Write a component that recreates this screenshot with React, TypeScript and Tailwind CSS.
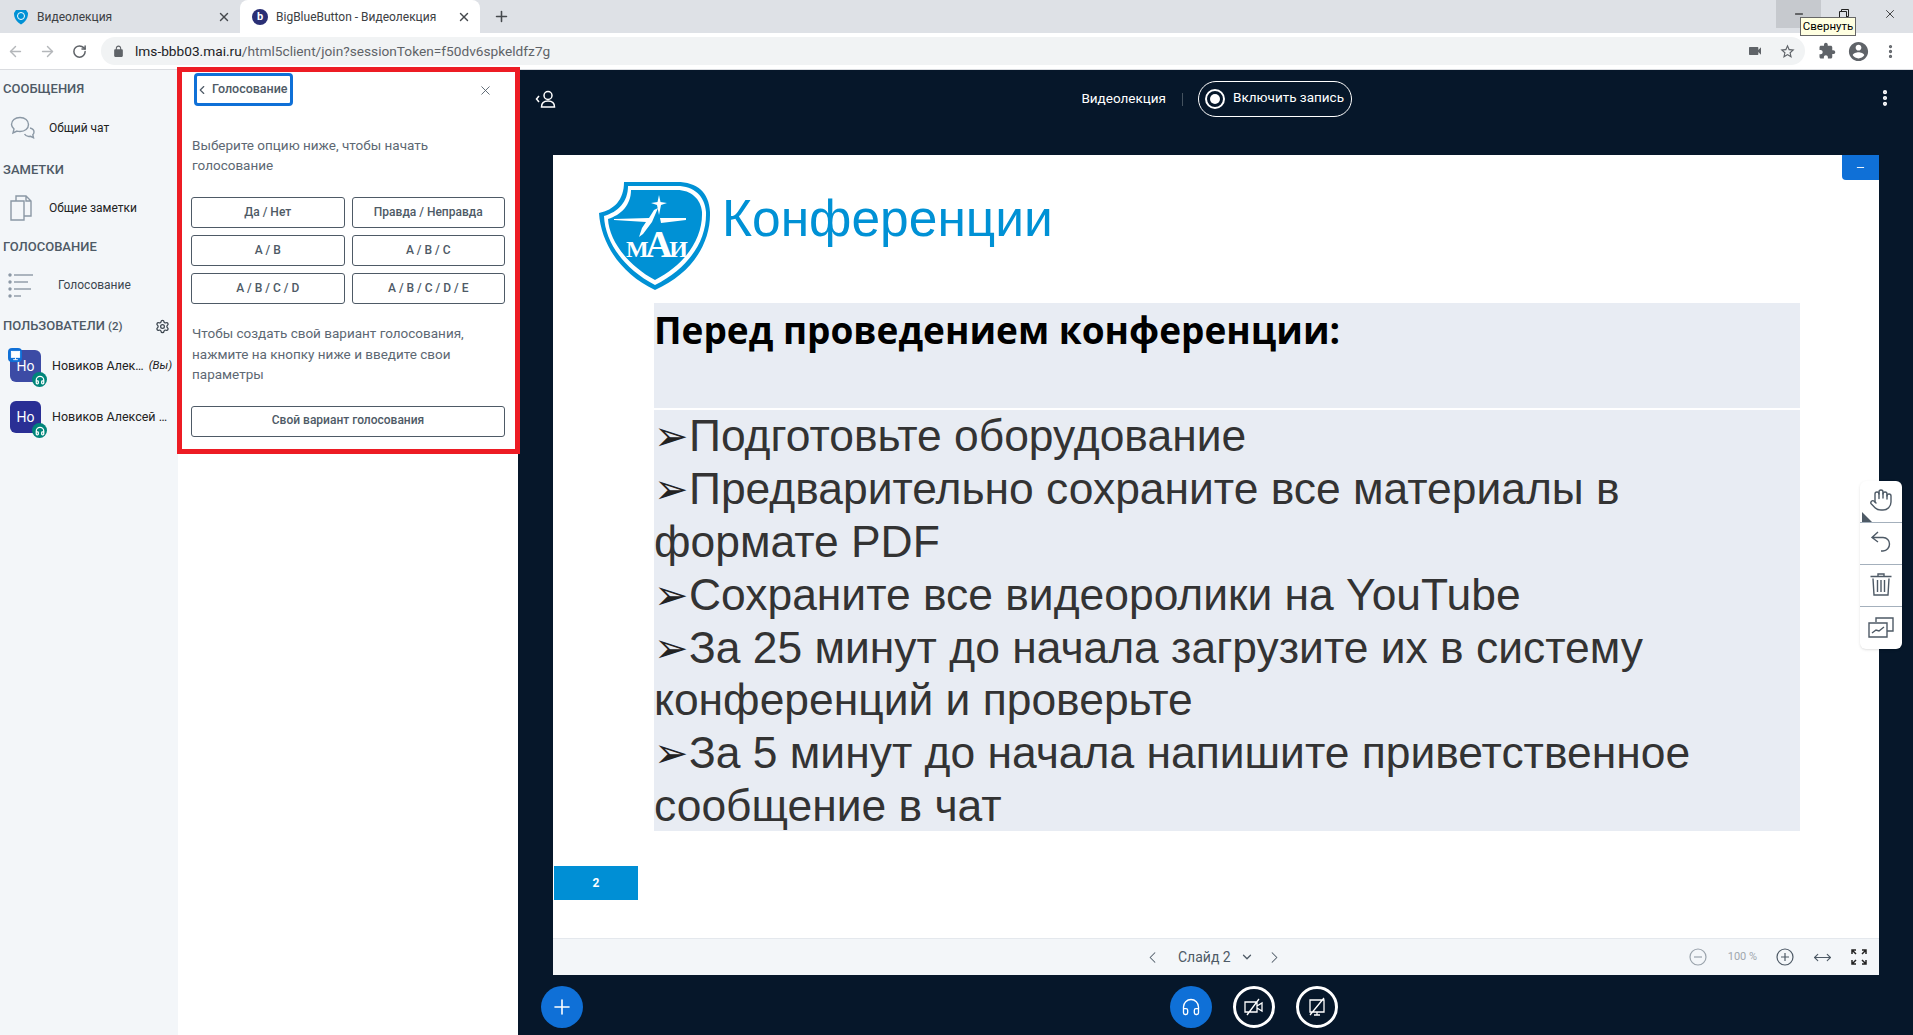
import React from 'react';
import { ArrowLeft, ArrowRight, RotateCw, Plus, X, ChevronLeft, ChevronRight, ChevronDown, Settings, MoreVertical, Minus, MoveHorizontal, Hand, Headphones } from 'lucide-react';

const ui = "font-['Roboto',sans-serif]";
const slideText = "font-['Liberation_Sans',sans-serif]";

const Maticon: React.FC<{ d: string; className?: string }> = ({ d, className }) => (
  <svg viewBox="0 0 24 24" fill="currentColor" className={className}>
    <path d={d} />
  </svg>
);

const Shield: React.FC = () => (
  <svg viewBox="0 0 112 108" className="w-[112px] h-[108px] shrink-0">
    <path d="M25 0 H78 C98 0 110 10 111 30 C112 62 92 92 56 108 C22 92 2 62 0 31 C15 28 25 18 25 0 Z" fill="#0091d5" />
    <path d="M29 4 H78 C95 4 106 14 107 30 C108 60 88 87 56 103 C25 87 6 60 5 34 C19 30 29 20 29 4 Z" fill="#fff" />
    <path d="M32 8 H78 C92 8 102 17 103 30 C104 58 85 83 56 98 C28 83 10 58 9 37 C22 33 32 23 32 8 Z" fill="#0091d5" />
    {/* star and plane */}
    <path d="M60 13 L61.500 20 L68 21 L62 23 L60 33 L58 23 L52 21 L58.500 20 Z" fill="#fff" />
    <path d="M59 26 L53 40 L44 52 L40 55 L43 46 L47 40 L15 38 L15 37 L50 36 L55 28 Z" fill="#fff" />
    <path d="M61 36 L87 36 L87 38 L62 41 Z" fill="#fff" />
    <text x="27" y="75" fill="#fff" fontFamily="Liberation Serif, serif" fontWeight="700" fontSize="24" textLength="62">
      М<tspan fontSize="38">А</tspan>И
    </text>
  </svg>
);

const SectionTitle: React.FC<{ children: React.ReactNode; className?: string }> = ({ children, className }) => (
  <div className={`text-[13px] font-medium leading-4 text-[#4e5a66] ${className ?? ''}`}>{children}</div>
);

const Avatar: React.FC<{ color: string; presenter?: boolean }> = ({ color, presenter }) => (
  <div className={`relative w-[31px] h-[32px] rounded-md ${color} flex items-center justify-center text-white text-[14px] shrink-0`}>
    Но
    {presenter && (
      <span className="absolute -left-[2px] -top-[2px] w-[14px] h-[14px] rounded bg-[#0f70d7] flex items-center justify-center">
        <svg viewBox="0 0 12 12" className="w-[11px] h-[11px]" fill="none" stroke="#fff">
          <rect x="1.5" y="1.5" width="9" height="6.5" fill="#fff" />
          <path d="M6 8v2.500M3.500 10.500h5" />
        </svg>
      </span>
    )}
    <span className="absolute -right-[6px] -bottom-[5px] w-[15px] h-[15px] rounded-full bg-[#00857a] flex items-center justify-center">
      <Headphones size={10} color="#fff" strokeWidth={3} />
    </span>
  </div>
);

const PollButton: React.FC<{ children: React.ReactNode; className?: string }> = ({ children, className }) => (
  <div className={`h-[31px] pb-[2px] rounded-[3px] border border-[#4e5a66] flex items-center justify-center text-[12px] font-medium text-[#4e5a66] ${className ?? ''}`}>
    {children}
  </div>
);

const bullets = [
  { arrow: true, text: 'Подготовьте оборудование' },
  { arrow: true, text: 'Предварительно сохраните все материалы в' },
  { arrow: false, text: 'формате PDF' },
  { arrow: true, text: 'Сохраните все видеоролики на YouTube' },
  { arrow: true, text: 'За 25 минут до начала загрузите их в систему' },
  { arrow: false, text: 'конференций и проверьте' },
  { arrow: true, text: 'За 5 минут до начала напишите приветственное' },
  { arrow: false, text: 'сообщение в чат' },
];

const App: React.FC = () => {
  return (
    <div className={`relative w-full h-screen overflow-hidden flex flex-col bg-white ${ui}`}>
      {/* Tabs */}
      <div className="relative h-[33px] bg-[#dee1e6] flex items-stretch text-[12px] text-[#3c4043] shrink-0">
        <div className="w-[240px] flex items-center pl-[13px] pr-[9px]">
          <svg viewBox="0 0 16 16" className="w-[16px] h-[16px]">
            <path d="M3 1 H13 L15 4 C15 10 12 13 8 15.500 C4 13 1 10 1 4 Z" fill="#0091d5" />
            <circle cx="8" cy="7" r="3.500" fill="none" stroke="#fff" />
          </svg>
          <span className="ml-[8px]">Видеолекция</span>
          <X size={14} strokeWidth={2.4} className="ml-auto text-[#45494d]" />
        </div>
        <div className="w-[240px] bg-white rounded-t-lg flex items-center pl-[12px] pr-[9px]">
          <span className="w-[16px] h-[16px] rounded-full bg-[#2a2f75] flex items-center justify-center text-white text-[11px] font-bold leading-none">b</span>
          <span className="ml-[8px]">BigBlueButton - Видеолекция</span>
          <X size={14} strokeWidth={2.4} className="ml-auto text-[#45494d]" />
        </div>
        <Plus size={17} strokeWidth={2.2} className="ml-[13px] self-center text-[#45494d]" />
        <div className="ml-auto w-[137px] flex items-start">
          <div className="w-[45px] h-[28px] bg-[#c6c9ce] flex items-center justify-center">
            <Minus size={12} className="text-black" />
          </div>
          <div className="w-[46px] h-[28px] flex items-center justify-center">
            <svg viewBox="0 0 10 10" className="w-[10px] h-[10px]" fill="none" stroke="#222">
              <path d="M.5 2.500h7v7h-7zM2.500 2.500v-2h7v7h-2" />
            </svg>
          </div>
          <div className="w-[46px] h-[28px] flex items-center justify-center">
            <X size={14} strokeWidth={1.2} className="text-black" />
          </div>
        </div>
      </div>
      {/* Tooltip over the window buttons */}
      <div className="absolute left-[1800px] top-[17px] h-[19px] w-[56px] bg-[#ffffe1] border border-[#666] flex items-center justify-center text-[11.5px] text-black z-20">
        Свернуть
      </div>

      {/* Toolbar */}
      <div className="h-[37px] bg-white border-b border-[#dadce0] flex items-center shrink-0 text-[#5f6368]">
        <ArrowLeft size={17} className="ml-[7px] text-[#b4b7ba]" />
        <ArrowRight size={17} className="ml-[15px] text-[#b4b7ba]" />
        <RotateCw size={15} strokeWidth={2.4} className="ml-[16px]" />
        <div className="ml-[14px] w-[1704px] h-[28px] rounded-full bg-[#f1f3f4] flex items-center pl-[11px] pr-[9px]">
          <Maticon className="w-[13px] h-[13px]" d="M18 8h-1V6c0-2.760-2.240-5-5-5S7 3.240 7 6v2H6c-1.100 0-2 .9-2 2v10c0 1.100.9 2 2 2h12c1.100 0 2-.9 2-2V10c0-1.100-.9-2-2-2zm-6-5c1.660 0 3 1.340 3 3v2H9V6c0-1.660 1.340-3 3-3z" />
          <span className="ml-[10px] text-[13.7px] text-[#5f6368]"><span className="text-[#202124]">lms-bbb03.mai.ru</span>/html5client/join?sessionToken=f50dv6spkeldfz7g</span>
          <Maticon className="ml-auto w-[16px] h-[16px]" d="M17 10.500V7c0-.55-.45-1-1-1H4c-.55 0-1 .45-1 1v10c0 .55.45 1 1 1h12c.55 0 1-.45 1-1v-3.500l4 4v-11l-4 4z" />
          <Maticon className="ml-[16px] w-[17px] h-[17px]" d="M22 9.240l-7.190-.62L12 2 9.190 8.630 2 9.240l5.460 4.730L5.820 21 12 17.270 18.180 21l-1.630-7.030L22 9.240zM12 15.400l-3.760 2.270 1-4.280-3.320-2.880 4.380-.38L12 6.100l1.710 4.040 4.380.38-3.320 2.880 1 4.280L12 15.400z" />
        </div>
        <Maticon className="ml-[13px] w-[18px] h-[18px]" d="M20.500 11H19V7c0-1.100-.9-2-2-2h-4V3.500C13 2.120 11.880 1 10.500 1S8 2.120 8 3.500V5H4c-1.100 0-1.990.9-1.990 2v3.800H3.500c1.490 0 2.700 1.210 2.700 2.700s-1.210 2.700-2.700 2.700H2V20c0 1.100.9 2 2 2h3.800v-1.500c0-1.490 1.210-2.700 2.700-2.700 1.490 0 2.700 1.210 2.700 2.700V22H17c1.100 0 2-.9 2-2v-4h1.500c1.380 0 2.500-1.120 2.500-2.500S21.880 11 20.500 11z" />
        <Maticon className="ml-[11px] w-[23px] h-[23px]" d="M12 2C6.480 2 2 6.480 2 12s4.480 10 10 10 10-4.480 10-10S17.520 2 12 2zm0 3c1.660 0 3 1.340 3 3s-1.340 3-3 3-3-1.340-3-3 1.340-3 3-3zm0 14.200c-2.500 0-4.710-1.280-6-3.220.03-1.990 4-3.080 6-3.080 1.990 0 5.970 1.090 6 3.080-1.290 1.940-3.500 3.220-6 3.220z" />
        <MoreVertical size={17} strokeWidth={2.6} className="ml-[12px]" />
      </div>

      {/* App */}
      <div className="flex-1 min-h-0 flex">
        {/* Sidebar */}
        <div className="w-[178px] bg-[#f3f6f9] pt-[11px] shrink-0">
          <SectionTitle className="pl-[3px]">СООБЩЕНИЯ</SectionTitle>
          <div className="mt-[19px] h-[24px] flex items-center pl-[10px] text-[12px] text-[#222]">
            <svg viewBox="0 0 26 24" className="w-[26px] h-[24px] shrink-0" fill="none" stroke="#8b98a5" strokeWidth="1.4">
              <path d="M10 1.500c5 0 8.500 3 8.500 7s-3.500 7-8.500 7c-1 0-2-.1-3-.4L3 17l1-4C2.500 11.500 1.500 10 1.500 8.500c0-4 3.500-7 8.500-7z" />
              <path d="M20 12c2.500.5 4 2 4 4 0 1-.4 2-1.200 2.700l.7 3-3-1.400c-2.500.5-5-.5-6-2.300" />
            </svg>
            <span className="ml-[13px]">Общий чат</span>
          </div>
          <SectionTitle className="pl-[3px] mt-[22px]">ЗАМЕТКИ</SectionTitle>
          <div className="mt-[17px] h-[26px] flex items-center pl-[10px] text-[12px] text-[#222]">
            <svg viewBox="0 0 22 26" className="w-[22px] h-[26px] shrink-0" fill="none" stroke="#8b98a5" strokeWidth="1.4">
              <path d="M1 6h13v19H1z" />
              <path d="M6 6V1h10l5 5v15h-7M16 1v5h5" />
            </svg>
            <span className="ml-[17px]">Общие заметки</span>
          </div>
          <SectionTitle className="pl-[3px] mt-[18px]">ГОЛОСОВАНИЕ</SectionTitle>
          <div className="mt-[17px] h-[26px] flex items-center pl-[8px] text-[12px] text-[#3c4650]">
            <svg viewBox="0 0 26 26" className="w-[26px] h-[26px] shrink-0" stroke="#8b98a5" strokeWidth="1.400" fill="#8b98a5">
              <circle cx="2" cy="3" r="1" /><path d="M6 3h19" />
              <circle cx="2" cy="10" r="1" /><path d="M6 10h14" />
              <circle cx="2" cy="17" r="1" /><path d="M6 17h17" />
              <circle cx="2" cy="24" r="1" /><path d="M6 24h7" />
            </svg>
            <span className="ml-[24px]">Голосование</span>
          </div>
          <div className="pl-[3px] pr-[8px] mt-[20px] flex items-center justify-between">
            <SectionTitle>ПОЛЬЗОВАТЕЛИ <span className="text-[11.5px]">(2)</span></SectionTitle>
            <Settings size={15} className="text-[#3c4650]" />
          </div>
          <div className="mt-[16px] pl-[10px] flex items-center text-[12.5px] text-[#222] whitespace-nowrap">
            <Avatar color="bg-[#3c4ba5]" presenter />
            <span className="ml-[11px]">Новиков Алек…</span>
            <span className="ml-[5px] italic text-[11.5px]">(Вы)</span>
          </div>
          <div className="mt-[19px] pl-[10px] flex items-center text-[12.5px] text-[#222] whitespace-nowrap">
            <Avatar color="bg-[#2a2f95]" />
            <span className="ml-[11px]">Новиков Алексей …</span>
          </div>
        </div>

        {/* Poll panel */}
        <div className="w-[340px] bg-white shrink-0 pl-[13px] pr-[13px] pt-[3px]">
          <div className="flex items-start justify-between">
            <div className="ml-[3px] w-[99px] h-[33px] rounded border-[3px] border-[#0f70d7] flex items-center text-[12.5px] font-medium text-[#4e5a66]">
              <ChevronLeft size={14} strokeWidth={2} className="-ml-[2px]" />
              <span className="ml-[3px] whitespace-nowrap">Голосование</span>
            </div>
            <X size={15} strokeWidth={1.4} className="mt-[10px] mr-[12px] text-[#4e5a66]" />
          </div>
          <p className="mt-[29px] pl-px text-[13.5px] leading-[20px] text-[#5d6873]">Выберите опцию ниже, чтобы начать голосование</p>
          <div className="mt-[22px] grid grid-cols-2 gap-x-[7px] gap-y-[7px]">
            <PollButton>Да / Нет</PollButton>
            <PollButton>Правда / Неправда</PollButton>
            <PollButton>A / B</PollButton>
            <PollButton>A / B / C</PollButton>
            <PollButton>A / B / C / D</PollButton>
            <PollButton>A / B / C / D / E</PollButton>
          </div>
          <p className="mt-[19px] pl-px text-[13.5px] leading-[20.500px] text-[#5d6873]">Чтобы создать свой вариант голосования, нажмите на кнопку ниже и введите свои параметры</p>
          <PollButton className="mt-[21px]">Свой вариант голосования</PollButton>
        </div>

        {/* Main */}
        <div className="relative flex-1 min-w-0 bg-[#06172a] flex flex-col text-white">
          <div className="relative h-[85px] shrink-0 flex items-start">
            <svg viewBox="0 0 22 18" className="absolute left-[17px] top-[20px] w-[22px] h-[18px]" fill="none" stroke="#fff" strokeWidth="1.5">
              <path d="M4 6 1.500 9 4 12" />
              <circle cx="13" cy="5.500" r="4" />
              <path d="M6.500 17c0-4 2.500-6 6.500-6s6.500 2 6.500 6z" />
            </svg>
            <div className="ml-[546px] mt-[11px] flex items-center text-[13.5px]">
              <span className="w-[102px] pb-[2px] text-right whitespace-nowrap">Видеолекция</span>
              <span className="ml-[16px] w-px h-[13px] bg-[#44525f]" />
              <div className="ml-[15px] w-[154px] h-[36px] rounded-full border border-white flex items-center pl-[6px]">
                <span className="w-[20px] h-[20px] rounded-full border-2 border-white flex items-center justify-center">
                  <span className="w-[10px] h-[10px] rounded-full bg-white" />
                </span>
                <span className="ml-[8px] pb-[3px] whitespace-nowrap">Включить запись</span>
              </div>
            </div>
            <MoreVertical size={20} strokeWidth={3} className="absolute left-[1357px] top-[18px]" />
          </div>

          {/* Slide */}
          <div className="flex-1 min-h-0 pl-[35px] pr-[34px]">
            <div className="relative h-full bg-white flex flex-col text-black">
              <div className="absolute right-0 top-0 w-[37px] h-[25px] bg-[#0f70d7] rounded-bl-sm flex items-center justify-center">
                <Minus size={11} color="#fff" />
              </div>
              <div className="flex-1 min-h-0 flex flex-col pt-[27px]">
                <div className="flex items-start pl-[46px]">
                  <Shield />
                  <span className={`${slideText} ml-[11px] text-[51.500px] leading-[72px] text-[#0091d5] whitespace-nowrap`}>Конференции</span>
                </div>
                <div className="mt-[13px] ml-[101px] w-[1146px] h-[105px] bg-[#e8ecf3] pt-[3px] font-['Open_Sans',sans-serif] font-bold text-[37px] leading-[48px] whitespace-nowrap">
                  Перед проведением конференции:
                </div>
                <div className={`${slideText} mt-[2px] ml-[101px] w-[1146px] h-[421px] bg-[#e8ecf3] text-[44.400px] text-[#333333] whitespace-nowrap`}>
                  {bullets.map((b) => (
                    <div key={b.text} className="h-[52.900px] leading-[52.900px] flex items-center">
                      {b.arrow && <span className="font-['DejaVu_Sans',sans-serif] w-[35px] text-[41px] leading-none text-[#222] shrink-0">➢</span>}
                      <span>{b.text}</span>
                    </div>
                  ))}
                </div>
                <div className="mt-[35px] ml-px w-[84px] h-[34px] bg-[#008fd5] flex items-center justify-center text-white text-[12px] font-bold">2</div>
              </div>
              {/* Slide controls */}
              <div className="relative h-[37px] shrink-0 bg-[#f3f6f9] border-t border-[#e4e8ed] flex items-center text-[#4e5a66]">
                <ChevronLeft size={19} strokeWidth={1.3} className="ml-[590px]" />
                <span className="ml-[16px] text-[14px]">Слайд 2</span>
                <ChevronDown size={14} strokeWidth={2.2} className="ml-[9px]" />
                <ChevronRight size={19} strokeWidth={1.3} className="ml-[11px]" />
                <svg viewBox="0 0 18 18" className="ml-[405px] w-[18px] h-[18px]" fill="none" stroke="#9aa3ac" strokeWidth="1.2">
                  <circle cx="9" cy="9" r="8" /><path d="M5 9h8" />
                </svg>
                <span className="ml-[21px] text-[11px] text-[#a0a7ae]">100 %</span>
                <svg viewBox="0 0 18 18" className="ml-[19px] w-[18px] h-[18px]" fill="none" stroke="#4e5a66" strokeWidth="1.2">
                  <circle cx="9" cy="9" r="8" /><path d="M5 9h8M9 5v8" />
                </svg>
                <MoveHorizontal size={19} strokeWidth={1.4} className="ml-[19px]" />
                <svg viewBox="0 0 16 16" className="ml-[19px] w-[16px] h-[16px]" fill="none" stroke="#222" strokeWidth="1.5">
                  <path d="M1 5V1h4M1 1l4 4M11 1h4v4M15 1l-4 4M1 11v4h4M1 15l4-4M15 11v4h-4M15 15l-4-4" />
                </svg>
              </div>
            </div>
          </div>

          {/* Bottom actions */}
          <div className="relative h-[60px] shrink-0">
            <div className="absolute left-[23px] top-[11px] w-[42px] h-[42px] rounded-full bg-[#0f70d7] flex items-center justify-center">
              <Plus size={24} strokeWidth={1.6} />
            </div>
            <div className="flex justify-start pl-[652px] pt-[11px] gap-[21px]">
              <div className="w-[42px] h-[42px] rounded-full bg-[#0f70d7] flex items-center justify-center">
                <Headphones size={20} strokeWidth={1.6} />
              </div>
              <div className="w-[42px] h-[42px] rounded-full border-[3px] border-white flex items-center justify-center">
                <svg viewBox="0 0 20 20" className="w-[20px] h-[20px]" fill="none" stroke="#fff" strokeWidth="1.3">
                  <path d="M1 5h12v10H1zM13 9l5-3v8l-5-3M3 18 15 2" />
                </svg>
              </div>
              <div className="w-[42px] h-[42px] rounded-full border-[3px] border-white flex items-center justify-center">
                <svg viewBox="0 0 20 20" className="w-[20px] h-[20px]" fill="none" stroke="#fff" strokeWidth="1.3">
                  <path d="M3 3h14v12H3zM7 18h6M10 15v3M3 18 17 1" />
                </svg>
              </div>
            </div>
          </div>

          {/* Floating whiteboard tools */}
          <div className="absolute left-[1342px] top-[411px] w-[42px] rounded-md bg-white flex flex-col shadow-sm text-[#4e5a66]">
            <div className="relative h-[42px] pb-[3px] flex items-center justify-center border-b border-[#a4b0bc]">
              <Hand size={24} strokeWidth={1.4} />
              <span className="absolute left-[2px] bottom-0 w-0 h-0 border-b-[10px] border-l-[10px] border-b-[#4e5a66] border-l-transparent rotate-90" />
            </div>
            <div className="h-[42px] pb-[3px] flex items-center justify-center border-b border-[#a4b0bc]">
              <svg viewBox="0 0 24 24" className="w-[24px] h-[24px]" fill="none" stroke="#4e5a66" strokeWidth="1.4">
                <path d="M9 2 3 7.500 9 12M3 7.500h11c4 0 6.500 3 6.500 6.500S18 21 14 21h-2" />
              </svg>
            </div>
            <div className="h-[42px] pb-[3px] flex items-center justify-center border-b border-[#a4b0bc]">
              <svg viewBox="0 0 24 24" className="w-[24px] h-[24px]" fill="none" stroke="#4e5a66" strokeWidth="1.4">
                <path d="M1.500 4.500h21M9 4.500V2h6v2.500M4 6.500l1 16.500h14l1-16.500M8.500 8v12M12 8v12M15.500 8v12" />
              </svg>
            </div>
            <div className="h-[42px] flex items-center justify-center">
              <svg viewBox="0 0 26 24" className="w-[26px] h-[24px]" fill="none" stroke="#4e5a66" strokeWidth="1.4">
                <path d="M8 6V2h17v13h-6" />
                <path d="M1 7h18v14H1zM4 17l4-3 3 1 5-4" />
              </svg>
            </div>
          </div>
        </div>
      </div>

      {/* Red annotation frame */}
      <div className="absolute left-[177px] top-[67px] w-[343px] h-[387px] border-[5px] border-[#ed1c24] pointer-events-none" />
    </div>
  );
};

export default App;
